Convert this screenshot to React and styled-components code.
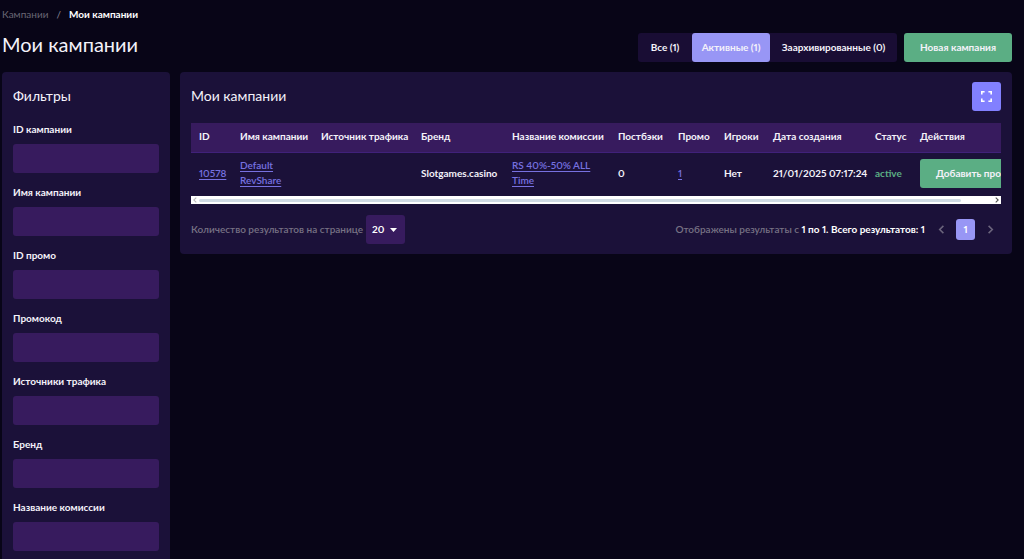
import React, { useRef, useState } from 'react';
import styled, { createGlobalStyle } from 'styled-components';

const GlobalStyle = createGlobalStyle`
  *, *::before, *::after {
    box-sizing: border-box;
  }

  body {
    margin: 0;
    background: #080517;
    color: #f4f2fa;
    font-family: Lato, "Noto Sans", sans-serif;
    font-size: 10px;
    line-height: 15px;
    font-variant-numeric: proportional-nums;
  }

  button, input, select {
    font: inherit;
    font-variant-numeric: inherit;
    color: inherit;
    border: 0;
    margin: 0;
  }

  button, select {
    cursor: pointer;
  }
`;

const Page = styled.div`
  display: flex;
  flex-direction: column;
  min-height: 100vh;
  padding: 7px 12px 0 2px;
`;

const Breadcrumbs = styled.nav`
  display: flex;
  gap: 8px;
  color: #8a8794;
`;

const Crumb = styled.a`
  color: #6a6775;
  text-decoration: none;
`;

const CurrentCrumb = styled.span`
  color: #fff;
  font-weight: 700;
`;

const TopBar = styled.header`
  display: flex;
  align-items: center;
  justify-content: space-between;
  margin: 11px 0 10px;
`;

const PageTitle = styled.h1`
  margin: 0;
  padding-bottom: 6px;
  font-size: 20px;
  line-height: 23px;
  font-weight: 400;
`;

const Actions = styled.div`
  display: flex;
  gap: 7px;
`;

const Tabs = styled.div`
  display: flex;
  border-radius: 3px;
  background: #190d34;
`;

const Tab = styled.button`
  width: ${({ $width }) => $width}px;
  height: 29px;
  padding: 0;
  border-radius: 3px;
  background: ${({ $active }) => ($active ? '#9896f5' : 'transparent')};
  font-weight: 700;
  white-space: nowrap;
`;

const GreenButton = styled.button`
  height: 29px;
  padding: 0 16px;
  border-radius: 3px;
  background: #5bae84;
  font-weight: 700;
  white-space: nowrap;
`;

const Layout = styled.div`
  display: grid;
  grid-template-columns: 168px minmax(0, 1fr);
  gap: 10px;
  flex: 1;
`;

const Panel = styled.section`
  padding: 10px 11px;
  border-radius: 4px;
  background: #1b1139;
`;

const Filters = styled(Panel).attrs({ as: 'aside' })`
  border-radius: 4px 4px 0 0;
  padding-bottom: 8px;
`;

const Campaigns = styled(Panel)`
  align-self: start;
`;

const PanelTitle = styled.h2`
  margin: 0;
  padding-bottom: 2px;
  font-size: 14px;
  line-height: 27px;
  font-weight: 400;
`;

const FieldList = styled.div`
  display: flex;
  flex-direction: column;
  gap: 12px;
  margin-top: 11px;
`;

const Field = styled.label`
  display: flex;
  flex-direction: column;
  gap: 7px;
  font-weight: 700;
`;

const Input = styled.input`
  width: 100%;
  height: 29px;
  padding: 0 8px;
  border-radius: 3px;
  background: #371b5e;
`;

const PanelHead = styled.div`
  display: flex;
  align-items: center;
  justify-content: space-between;
  margin-bottom: 12px;
`;

const IconButton = styled.button`
  display: flex;
  align-items: center;
  justify-content: center;
  width: 29px;
  height: 29px;
  padding: 0;
  border-radius: 3px;
  background: #8280ff;
`;

const TableScroll = styled.div`
  overflow-x: auto;
  scrollbar-width: none;
`;

const Table = styled.table`
  width: 842px;
  table-layout: fixed;
  border-collapse: collapse;
  text-align: left;
`;

const HeadCell = styled.th`
  height: 29px;
  padding: 0 8px 2px;
  border-bottom: 1px solid #40217a;
  background: #371b5e;
  font-weight: 700;
  white-space: nowrap;
`;

const Cell = styled.td`
  height: 44px;
  padding: 0 8px 2px;
  font-weight: 700;
  color: ${({ $active }) => ($active ? '#5bae84' : 'inherit')};
  white-space: ${({ $nowrap }) => ($nowrap ? 'nowrap' : 'normal')};
`;

const CellLink = styled.a`
  color: #7771e0;
  font-weight: 600;
  text-underline-offset: 2px;
`;

const ScrollBar = styled.div`
  display: flex;
  align-items: center;
  height: 8px;
  background: #fff;
`;

const ScrollArrow = styled.button`
  display: flex;
  align-items: center;
  justify-content: center;
  width: 8px;
  height: 8px;
  padding: 0;
  background: transparent;
  color: ${({ $muted }) => ($muted ? '#b9b9b9' : '#505050')};
`;

const ScrollTrack = styled.div`
  flex: 1;
`;

const ScrollThumb = styled.div`
  height: 3px;
  border-radius: 2px;
  background: #d0dbe4;
`;

const Footer = styled.footer`
  display: flex;
  align-items: center;
  justify-content: space-between;
  margin-top: 11px;
  color: #777184;
  font-weight: 600;
`;

const PageSize = styled.label`
  display: flex;
  align-items: center;
  gap: 3px;
  white-space: nowrap;
`;

const SelectBox = styled.span`
  display: grid;
  align-items: center;
  border-radius: 3px;
  background: #371b5e;
  color: #fff;

  > * {
    grid-area: 1 / 1;
  }

  > svg {
    justify-self: end;
    margin-right: 8px;
    pointer-events: none;
  }
`;

const Select = styled.select`
  width: 39px;
  height: 29px;
  padding: 0 0 0 6px;
  appearance: none;
  background: transparent;
  font-weight: 700;
`;

const Pagination = styled.div`
  display: flex;
  align-items: center;
  white-space: nowrap;
`;

const Summary = styled.span`
  margin-right: 5px;

  strong {
    color: #fff;
    font-weight: 700;
  }
`;

const PageArrow = styled.button`
  display: flex;
  align-items: center;
  justify-content: center;
  width: 22px;
  height: 21px;
  padding: 0;
  background: transparent;
  color: #6b647c;
`;

const PageNumber = styled.button`
  width: 19px;
  height: 21px;
  margin: 0 4px;
  padding: 0;
  border-radius: 3px;
  background: #9896f5;
  color: #fff;
  font-weight: 700;
`;

const Chevron = ({ left, size = 9 }) => (
  <svg width={size} height={size} viewBox="0 0 8 8" fill="none" stroke="currentColor" strokeWidth="1.4">
    <path d={left ? 'M5.7 0.8 2.4 4l3.3 3.2' : 'M2.3 0.8 5.6 4 2.3 7.2'} />
  </svg>
);

const filters = [
  'ID кампании',
  'Имя кампании',
  'ID промо',
  'Промокод',
  'Источники трафика',
  'Бренд',
  'Название комиссии',
];

const tabs = [
  { id: 'all', label: 'Все (1)', width: 54 },
  { id: 'active', label: 'Активные (1)', width: 78 },
  { id: 'archived', label: 'Заархивированные (0)', width: 127 },
];

const columns = [
  { title: 'ID', width: 41 },
  { title: 'Имя кампании', width: 81 },
  { title: 'Источник трафика', width: 100 },
  { title: 'Бренд', width: 91 },
  { title: 'Название комиссии', width: 106 },
  { title: 'Постбэки', width: 60 },
  { title: 'Промо', width: 46 },
  { title: 'Игроки', width: 49 },
  { title: 'Дата создания', width: 102 },
  { title: 'Статус', width: 45 },
  { title: 'Действия', width: 121 },
];

function CampaignTable() {
  const scroller = useRef(null);
  const [offset, setOffset] = useState(0);

  const scrollBy = left => scroller.current.scrollBy({ left });

  return (
    <>
      <TableScroll ref={scroller} onScroll={e => setOffset(e.currentTarget.scrollLeft)}>
        <Table>
          <colgroup>
            {columns.map(({ title, width }) => <col key={title} style={{ width }} />)}
          </colgroup>
          <thead>
            <tr>
              {columns.map(({ title }) => <HeadCell key={title}>{title}</HeadCell>)}
            </tr>
          </thead>
          <tbody>
            <tr>
              <Cell><CellLink href="#campaign">10578</CellLink></Cell>
              <Cell><CellLink href="#campaign">Default RevShare</CellLink></Cell>
              <Cell />
              <Cell>Slotgames.casino</Cell>
              <Cell><CellLink href="#commission">RS 40%-50% ALL Time</CellLink></Cell>
              <Cell>0</Cell>
              <Cell><CellLink href="#promo">1</CellLink></Cell>
              <Cell>Нет</Cell>
              <Cell $nowrap>21/01/2025 07:17:24</Cell>
              <Cell $active>active</Cell>
              <Cell><GreenButton type="button">Добавить промо</GreenButton></Cell>
            </tr>
          </tbody>
        </Table>
      </TableScroll>
      <ScrollBar>
        <ScrollArrow type="button" aria-label="Влево" $muted={offset === 0} onClick={() => scrollBy(-40)}>
          <Chevron left size={6} />
        </ScrollArrow>
        <ScrollTrack>
          <ScrollThumb style={{ width: '96%', transform: `translateX(${offset}px)` }} />
        </ScrollTrack>
        <ScrollArrow type="button" aria-label="Вправо" onClick={() => scrollBy(40)}>
          <Chevron size={6} />
        </ScrollArrow>
      </ScrollBar>
    </>
  );
}

export default function App() {
  const [tab, setTab] = useState('active');

  return (
    <>
      <GlobalStyle />
      <Page>
        <Breadcrumbs>
          <Crumb href="#campaigns">Кампании</Crumb>
          <span>/</span>
          <CurrentCrumb>Мои кампании</CurrentCrumb>
        </Breadcrumbs>

        <TopBar>
          <PageTitle>Мои кампании</PageTitle>
          <Actions>
            <Tabs>
              {tabs.map(({ id, label, width }) => (
                <Tab key={id} type="button" $width={width} $active={tab === id} onClick={() => setTab(id)}>
                  {label}
                </Tab>
              ))}
            </Tabs>
            <GreenButton type="button">Новая кампания</GreenButton>
          </Actions>
        </TopBar>

        <Layout>
          <Filters>
            <PanelTitle>Фильтры</PanelTitle>
            <FieldList>
              {filters.map(label => (
                <Field key={label}>
                  {label}
                  <Input type="text" />
                </Field>
              ))}
            </FieldList>
          </Filters>

          <Campaigns>
            <PanelHead>
              <PanelTitle>Мои кампании</PanelTitle>
              <IconButton type="button" aria-label="На весь экран">
                <svg width="11" height="11" viewBox="0 0 11 11" fill="none" stroke="#fff" strokeWidth="1.6">
                  <path d="M.8 3.6V.8h2.8M7.4.8h2.8v2.8M10.2 7.4v2.8H7.4M3.6 10.2H.8V7.4" />
                </svg>
              </IconButton>
            </PanelHead>

            <CampaignTable />

            <Footer>
              <PageSize>
                Количество результатов на странице
                <SelectBox>
                  <Select defaultValue="20">
                    <option>20</option>
                    <option>50</option>
                    <option>100</option>
                  </Select>
                  <svg width="7" height="4" viewBox="0 0 7 4" fill="currentColor">
                    <path d="M0 0h7L3.5 4z" />
                  </svg>
                </SelectBox>
              </PageSize>
              <Pagination>
                <Summary>
                  Отображены результаты с <strong>1 по 1. Всего результатов: 1</strong>
                </Summary>
                <PageArrow type="button" aria-label="Назад"><Chevron left /></PageArrow>
                <PageNumber type="button">1</PageNumber>
                <PageArrow type="button" aria-label="Вперёд"><Chevron /></PageArrow>
              </Pagination>
            </Footer>
          </Campaigns>
        </Layout>
      </Page>
    </>
  );
}
